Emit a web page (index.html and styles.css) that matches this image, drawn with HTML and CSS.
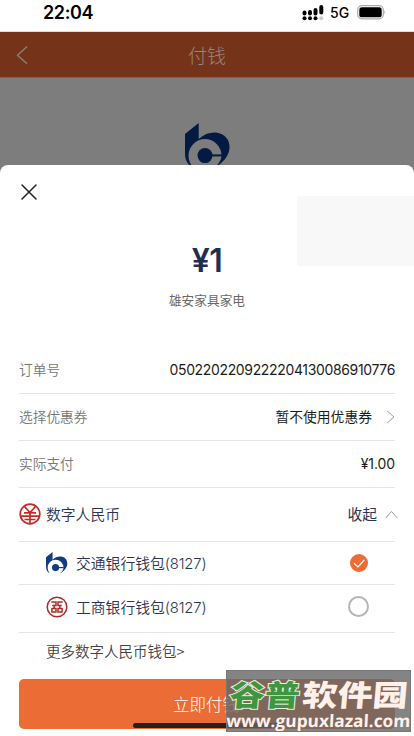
FILE: index.html
```html
<!DOCTYPE html>
<html lang="zh-CN">
<head>
<meta charset="utf-8">
<title>付钱</title>
<link rel="stylesheet" href="styles.css">
</head>
<body>
<div class="phone">
  <header class="status">
    <span class="time">22:04</span>
    <div class="status-right">
      <svg class="signal" width="22" height="16" viewBox="0 0 22 16">
        <path d="M2.500 7.500v1M8 7v1.500M13.500 5v3.500M19.300 2v5.500" stroke="#000" stroke-width="4" stroke-linecap="round"/>
        <circle cx="2.500" cy="13.200" r="2"/><circle cx="8" cy="13.200" r="2"/><circle cx="13.500" cy="13.200" r="2"/><circle cx="19.300" cy="13.200" r="2" fill="#ccc"/>
      </svg>
      <span class="net">5G</span>
      <svg class="battery" width="30" height="15" viewBox="0 0 30 15">
        <rect x=".7" y=".7" width="25.600" height="13.200" rx="4.200" fill="#fff" stroke="#aaa" stroke-width="1.200"/>
        <rect x="2.300" y="2.300" width="22.400" height="10" rx="2.600"/>
        <path d="M27.500 5.200q1.800 2.100 0 4.200z" fill="#999"/>
      </svg>
    </div>
  </header>
  <nav class="nav">
    <svg class="back" width="12" height="20" viewBox="0 0 12 20"><path d="M11 1.500 1.500 10.300 11 18.800" fill="none" stroke="#8f817a" stroke-width="1.300"/></svg>
    <h1>付钱</h1>
  </nav>
  <div class="backdrop">
    <svg width="46" height="46" viewBox="0 0 46 46" fill="#031b43">
      <path d="M0 11 13.700 0V16C19 11 25 9 31 9.500 40 10.500 45 17 44.500 25 44 33 38 40 29 45 34 41 36.500 37 36.500 32.600A16.500 16.500 0 0 0 3.500 32.600C3.500 37 5 41 8 45 3 42 0 37 0 31Z"/>
      <circle cx="20" cy="32.600" r="7.500"/><path d="M27 31.400h10v2H27z"/>
    </svg>
  </div>
  <main class="sheet">
    <div class="blank"></div>
    <svg class="close" width="16" height="16" viewBox="0 0 16 16"><path d="m1 1 14 14M15 1 1 15" stroke="#222" stroke-width="1.500" stroke-linecap="round"/></svg>
    <div class="amount">¥1</div>
    <div class="shop">雄安家具家电</div>
    <section class="rows">
      <div class="row order"><span class="label">订单号</span><span class="value serial">0502202209222204130086910776</span></div>
      <div class="row"><span class="label">选择优惠券</span><span class="value coupon">暂不使用优惠券</span>
        <svg class="arrow" width="9" height="14" viewBox="0 0 9 14"><path d="m1 .8 7 6.200-7 6.200" fill="none" stroke="#999"/></svg></div>
      <div class="row pay"><span class="label">实际支付</span><span class="value sum">¥1.00</span></div>
      <div class="row currency">
        <svg class="ico" width="22" height="22" viewBox="0 0 22 22" fill="none" stroke="#c52b27" stroke-width="1.700"><circle cx="11" cy="11" r="9.800"/><path d="m5.500 3.500 5.500 6 5.500-6M11 9.500V21M5 9.800h12M1.500 13.200h19M5.500 16.500h11"/></svg>
        <span class="name">数字人民币</span><span class="fold">收起</span>
        <svg class="up" width="13" height="9" viewBox="0 0 13 9"><path d="m.7 8 5.800-6.500L12.300 8" fill="none" stroke="#999"/></svg>
      </div>
      <div class="row wallet first">
        <svg class="ico" width="22" height="22" viewBox="0 0 46 46" fill="#123c80">
          <path d="M0 11 13.700 0V16C19 11 25 9 31 9.500 40 10.500 45 17 44.500 25 44 33 38 40 29 45 34 41 36.500 37 36.500 32.600A16.500 16.500 0 0 0 3.500 32.600C3.500 37 5 41 8 45 3 42 0 37 0 31Z"/>
          <circle cx="20" cy="32.600" r="7.500"/><path d="M27 31.400h10v2.400H27z"/>
        </svg>
        <span class="name">交通银行钱包<span class="digits">(8127)</span></span>
        <svg class="check" width="18" height="18" viewBox="0 0 18 18"><circle cx="9" cy="9" r="9" fill="#eb6d35"/><path d="m4 9.200 4 3.800 6.300-7" fill="none" stroke="#fff" stroke-width="1.200"/></svg>
      </div>
      <div class="row wallet second">
        <svg class="ico" width="22" height="22" viewBox="0 0 22 22" fill="none" stroke="#b02b2a" stroke-width="1.500"><circle cx="11" cy="11" r="9.800"/><path d="M5.300 6h4.700v3.400H6.200M8.200 9.400v3.200M5.300 9v0M5.900 12.600H10V16H5.300M5.900 11.900V16M16.700 6H12v3.400h3.800M13.800 9.400v3.200M16.100 12.600H12V16h4.700M16.100 11.900V16"/></svg>
        <span class="name">工商银行钱包<span class="digits">(8127)</span></span>
        <span class="radio"></span>
      </div>
    </section>
    <div class="more">更多数字人民币钱包&gt;</div>
    <button class="submit">立即付钱</button>
  </main>
  <div class="home"></div>
  <aside class="mark">
    <svg width="185" height="62" viewBox="0 0 185 62">
      <g class="mark-title" transform="translate(3 35.500) skewX(-5) scale(1.190 1)">
        <text x="0" y="0" class="green">谷普</text>
        <text x="61" y="0" class="white">软件园</text>
      </g>
      <g transform="translate(0 56.500) skewX(-3)"><text x="0" y="0" textLength="184" lengthAdjust="spacingAndGlyphs" class="url">www.gupuxlazal.com</text></g>
    </svg>
  </aside>
</div>
</body>
</html>
```

FILE: styles.css
```css
* { box-sizing: border-box; }
body { margin: 0; background: #fff; font-family: "Noto Sans CJK SC", sans-serif; }
.phone { position: relative; width: 414px; height: 736px; overflow: hidden; display: flex; flex-direction: column; }
.status { height: 32px; flex: none; display: flex; align-items: flex-start; justify-content: space-between; padding: 0 27px 0 43px; border-bottom: 1px solid #ddd; font-family: Inter, sans-serif; color: #000; }
.time { font-size: 18px; font-weight: 600; line-height: 26px; letter-spacing: -.4px; }
.status-right { display: flex; align-items: flex-start; }
.signal { margin: 5px 6px 0 0; }
.net { width: 27px; font-size: 14px; font-weight: 500; line-height: 26px; }
.battery { margin-top: 5px; }
.nav { height: 46px; flex: none; display: flex; align-items: center; background: #75341a; padding: 0 28px 0 16px; border-bottom: 1px solid #805f50; }
.nav h1 { flex: 1; margin: 0; text-align: center; font-size: 19px; font-weight: 300; line-height: 28px; color: #97857c; }
.backdrop { height: 96px; flex: none; background: #7d7d7d; padding: 45px 0 0 185px; line-height: 0; }
.sheet { position: relative; height: 571px; flex: none; margin-top: -9px; background: #fff; border-radius: 8px 8px 0 0; padding: 19px 19px 0; display: flex; flex-direction: column; }
.blank { position: absolute; right: 0; top: 31px; width: 117px; height: 70px; background: #f8f8f8; }
.close { margin-left: 2px; flex: none; }
.amount { margin-top: 42px; height: 38px; text-align: center; font: 600 32px/38px Inter, sans-serif; letter-spacing: -.5px; color: #222e4d; }
.shop { margin-top: 10px; height: 20px; line-height: 20px; text-align: center; font-size: 12.7px; color: #686868; }
.rows { margin-top: 37px; }
.row { display: flex; align-items: center; height: 47px; padding-bottom: 1px; border-bottom: 1px solid #e4e4e4; }
.label { margin-bottom: 2px; font-size: 13.7px; font-weight: 350; color: #777; }
.value { margin-left: auto; font-size: 13.8px; color: #1c1c1c; }
.coupon { margin-bottom: 2px; }
.serial, .sum { font-family: Inter, sans-serif; font-size: 14px; letter-spacing: -.35px; }
.sum { letter-spacing: -.1px; }
.arrow { margin-left: 14px; }
.currency { height: 54px; }
.currency .name, .wallet .name { color: #2c3451; font-size: 14.8px; font-weight: 350; }
.currency .name { margin: 0 0 2px 5px; }
.currency .ico { margin-bottom: 1px; }
.fold { margin: 0 0 2px auto; font-size: 14.8px; color: #2c3451; }
.up { margin: 0 -3px 0 8px; }
.wallet { padding-left: 27px; }
.wallet .name { margin-left: 8px; }
.digits { font-family: Inter, sans-serif; letter-spacing: -.15px; }
.first { height: 43px; }
.second { height: 48px; padding-bottom: 4px; }
.second .name { margin-bottom: 1px; }
.check { margin: 0 27px 0 auto; }
.radio { width: 21px; height: 21px; margin: 0 26px 0 auto; border: 2px solid #b5b5b5; border-radius: 50%; }
.more { height: 46px; padding: 6px 0 0 27px; font-size: 14.5px; line-height: 24px; color: #444; font-weight: 350; }
.submit { width: 376px; height: 50px; border: 0; border-radius: 5px; padding: 0 2px 1px 0; background: #eb6d35; color: #fff; font: 300 16.5px/48px "Noto Sans CJK SC", sans-serif; }
.home { position: absolute; left: 133px; top: 723px; width: 148px; height: 5px; border-radius: 3px; background: #222; }
.mark { position: absolute; left: 226px; top: 670px; width: 185px; height: 62px; background: rgba(101, 101, 101, .8); border: 1px solid #777; line-height: 0; }
.mark svg { margin: -1px; }
.mark-title { font: 900 29.5px "Noto Sans CJK SC", sans-serif; }
.green { fill: #3f963e; stroke: #e5eedf; stroke-width: 2px; paint-order: stroke; }
.white { fill: #fff0ea; }
.url { font: 700 17px "Open Sans", sans-serif; fill: #fff0ea; }
```
